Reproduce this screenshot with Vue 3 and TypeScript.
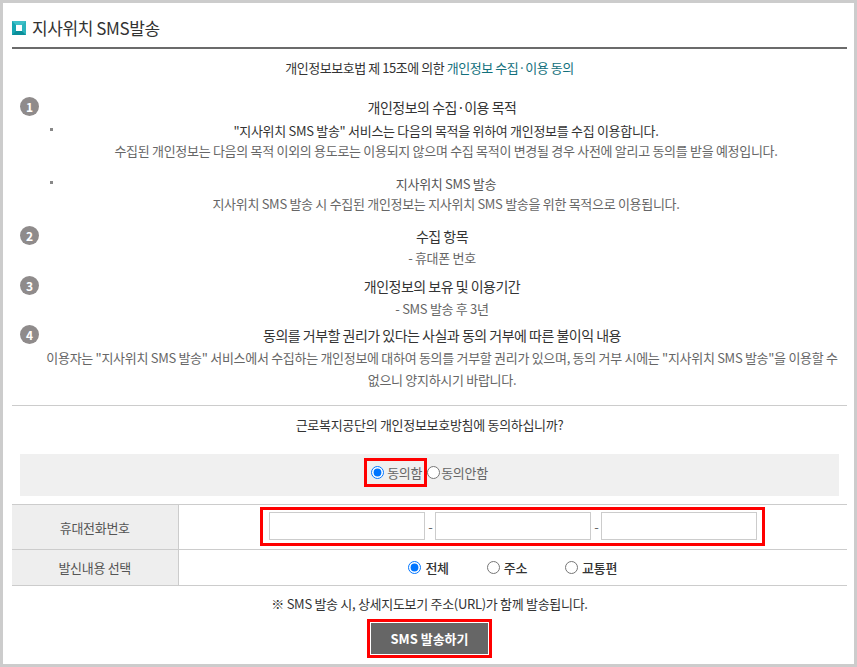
<script setup lang="ts">
interface Sub { title: string; lines: string[] }
const subs: Sub[] = [
  { title: '"지사위치 SMS 발송" 서비스는 다음의 목적을 위하여 개인정보를 수집 이용합니다.', lines: ['수집된 개인정보는 다음의 목적 이외의 용도로는 이용되지 않으며 수집 목적이 변경될 경우 사전에 알리고 동의를 받을 예정입니다.'] },
  { title: '지사위치 SMS 발송', lines: ['지사위치 SMS 발송 시 수집된 개인정보는 지사위치 SMS 발송을 위한 목적으로 이용됩니다.'] },
]
</script>

<template>
  <div class="frame">
    <h1 class="title"><span class="mark"></span>지사위치 SMS발송</h1>
    <p class="lead">개인정보보호법 제 15조에 의한 <span class="teal">개인정보 수집·이용 동의</span></p>

    <section class="item first">
      <span class="num">1</span>
      <div class="body">
        <h2>개인정보의 수집·이용 목적</h2>
        <div v-for="(s, i) in subs" :key="i" class="sub" :class="{ second: i === 1 }">
          <span class="dot"></span>
          <h3 :class="{ light: i === 1 }">{{ s.title }}</h3>
          <p v-for="l in s.lines" :key="l">{{ l }}</p>
        </div>
      </div>
    </section>

    <section class="item two">
      <span class="num">2</span>
      <div class="body">
        <h2>수집 항목</h2>
        <p class="after">- 휴대폰 번호</p>
      </div>
    </section>

    <section class="item three">
      <span class="num">3</span>
      <div class="body">
        <h2>개인정보의 보유 및 이용기간</h2>
        <p class="after">- SMS 발송 후 3년</p>
      </div>
    </section>

    <section class="item four">
      <span class="num">4</span>
      <div class="body">
        <h2>동의를 거부할 권리가 있다는 사실과 동의 거부에 따른 불이익 내용</h2>
        <p class="after tall">이용자는 "지사위치 SMS 발송" 서비스에서 수집하는 개인정보에 대하여 동의를 거부할 권리가 있으며, 동의 거부 시에는 "지사위치 SMS 발송"을 이용할 수 없으니 양지하시기 바랍니다.</p>
      </div>
    </section>

    <p class="question">근로복지공단의 개인정보보호방침에 동의하십니까?</p>

    <div class="agree">
      <label class="agree-on"><input type="radio" name="agree" checked />동의함</label>
      <label class="agree-off"><input type="radio" name="agree" />동의안함</label>
    </div>

    <table class="form">
      <tbody>
        <tr class="row-phone">
          <th>휴대전화번호</th>
          <td>
            <div class="phones">
              <input type="text" /><span>-</span><input type="text" /><span>-</span><input type="text" />
            </div>
          </td>
        </tr>
        <tr class="row-kind">
          <th>발신내용 선택</th>
          <td>
            <div class="kinds">
              <label><input type="radio" name="kind" checked />전체</label>
              <label><input type="radio" name="kind" />주소</label>
              <label><input type="radio" name="kind" />교통편</label>
            </div>
          </td>
        </tr>
      </tbody>
    </table>

    <p class="note">※ SMS 발송 시, 상세지도보기 주소(URL)가 함께 발송됩니다.</p>

    <div class="send-wrap">
      <div class="send-box"><button type="button">SMS 발송하기</button></div>
    </div>
  </div>
</template>

<style>
html, body { margin: 0; background: #fff; }
</style>

<style scoped>
.frame {
  box-sizing: border-box;
  width: 857px;
  height: 667px;
  border: 3px solid #ccc;
  padding: 0 7px 0 9px;
  font-family: "Noto Sans CJK KR", "Noto Sans", sans-serif;
  font-size: 13px;
  letter-spacing: -0.3px;
  color: #666;
  background: #fff;
  overflow: hidden;
}
h1, h2, h3, p { margin: 0; font-weight: 400; }
.title {
  display: flex;
  align-items: center;
  box-sizing: border-box;
  height: 46px;
  padding-top: 5px;
  border-bottom: 2px solid #6b6b6b;
  font-size: 17px;
  letter-spacing: -0.4px;
  color: #333;
}
.mark {
  box-sizing: border-box;
  width: 14px;
  height: 14px;
  margin-right: 6px;
  border-style: solid;
  border-width: 4px;
  border-color: #3fc0c8 #2cb4bd #0b8f9a #17a6b2;
  background: #fff;
}
.lead {
  height: 37px;
  line-height: 37px;
  text-align: center;
  letter-spacing: -0.45px;
  color: #333;
}
.teal { color: #12707c; }
.item { display: flex; align-items: flex-start; }
.first { margin-top: 11px; }
.two { margin-top: 12px; }
.three { margin-top: 8px; }
.four { margin-top: 6px; }
.num {
  flex: none;
  width: 19px;
  height: 19px;
  margin: 0 0 0 8px;
  border-radius: 50%;
  background: #8f8b8b;
  color: #fff;
  font-size: 12px;
  font-weight: 700;
  line-height: 19px;
  text-align: center;
  letter-spacing: 0;
}
.body {
  flex: 1;
  min-width: 0;
  padding-right: 2px;
  text-align: center;
  word-break: keep-all;
}
h2 { font-size: 14px; line-height: 20px; letter-spacing: -0.5px; color: #333; }
h3 { font-size: 13px; line-height: 20px; color: #333; font-weight: 400; }
h3.light { color: #555; }
.body p { line-height: 20px; }
.sub { position: relative; margin-top: 4px; padding-left: 8px; }
.sub.second { margin-top: 13px; }
.dot {
  position: absolute;
  left: 11px;
  top: 7px;
  width: 3px;
  height: 3px;
  background: #888;
}
.after { margin-top: 2px; }
.three .after { margin-top: 3px; }
.body p.after.tall { line-height: 22px; }
.question {
  margin-top: 14px;
  padding-top: 9px;
  border-top: 1px solid #ccc;
  line-height: 20px;
  text-align: center;
  color: #333;
}
.agree {
  display: flex;
  align-items: flex-start;
  justify-content: center;
  box-sizing: border-box;
  height: 42px;
  margin: 19px 8px 8px 8px;
  padding: 4px 7px 0 0;
  background: #f0f0f0;
}
.agree label { display: inline-flex; align-items: center; }
.agree-off { height: 29px; }
.agree input { margin: 0 1px 0 0; }
.agree .agree-on input { margin-right: 3px; }
.agree-on {
  box-sizing: border-box;
  height: 29px;
  padding: 0 2px 0 4px;
  border: 3px solid #f00;
}
.form {
  width: 100%;
  border-collapse: collapse;
  border-top: 1px solid #ccc;
  border-bottom: 1px solid #ccc;
}
th {
  width: 166px;
  box-sizing: border-box;
  padding: 0;
  background: #eee;
  border-right: 1px solid #ccc;
  font-weight: 400;
  color: #555;
}
td { padding: 0; text-align: center; }
.row-phone { height: 45px; border-bottom: 1px solid #ccc; }
.row-kind { height: 36px; }
.phones {
  display: inline-flex;
  align-items: center;
  box-sizing: border-box;
  height: 39px;
  margin-bottom: 2px;
  padding: 0 5px 0 6px;
  border: 3px solid #f00;
  vertical-align: middle;
}
.phones span { width: 10px; text-align: center; }
.phones input {
  box-sizing: border-box;
  width: 156px;
  height: 28px;
  margin: 0;
  padding: 0 4px;
  border: 1px solid #ccc;
  background: #fff;
}
.kinds {
  display: flex;
  justify-content: center;
  gap: 38px;
  color: #333;
  font-weight: 500;
}
.kinds label { display: inline-flex; align-items: center; }
.kinds input { margin: 0 4px 0 0; }
.note {
  margin-top: 8px;
  line-height: 20px;
  text-align: center;
  color: #333;
}
.send-wrap { display: flex; justify-content: center; margin-top: 5px; }
.send-box {
  box-sizing: border-box;
  width: 125px;
  height: 39px;
  border: 3px solid #f00;
  background: #fff;
  padding: 1px;
}
.send-box button {
  display: block;
  width: 100%;
  height: 100%;
  border: 0;
  padding: 0;
  background: #666;
  color: #fff;
  font: inherit;
  font-size: 13px;
  font-weight: 700;
  letter-spacing: 0;
}
</style>
